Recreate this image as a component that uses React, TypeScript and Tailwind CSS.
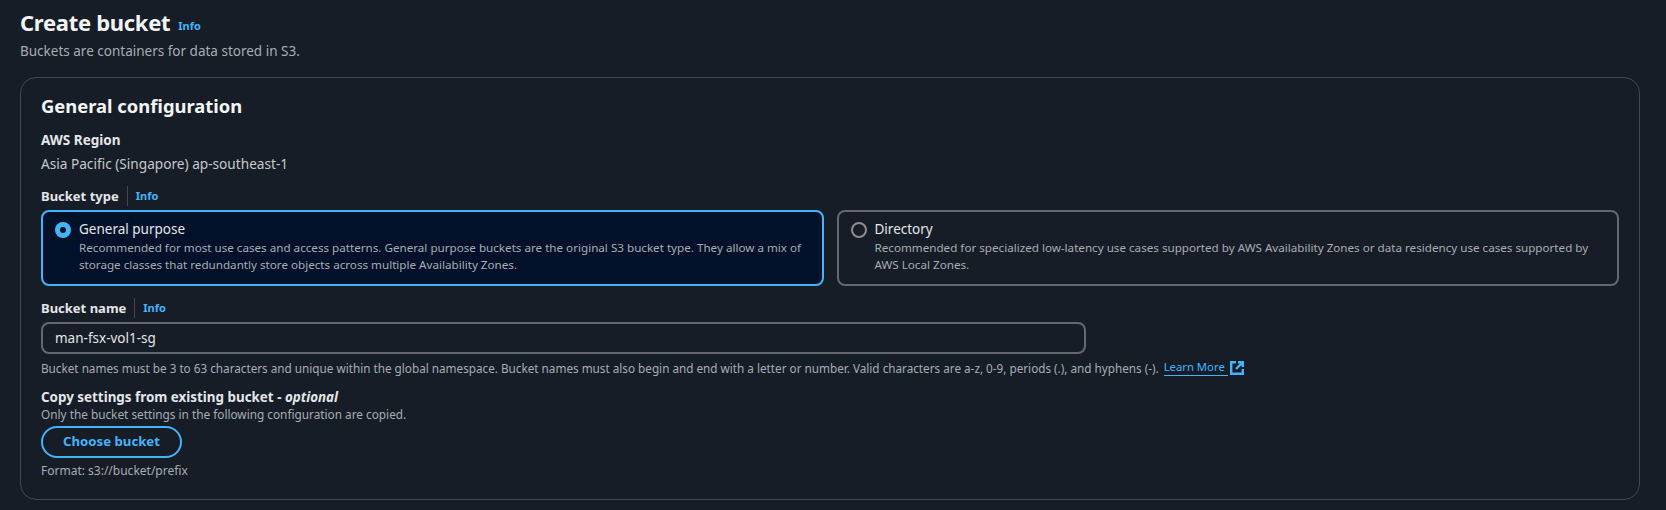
const font = "font-['Noto_Sans',sans-serif]";

function InfoLink() {
  return <span className="text-[11px] font-bold leading-[20px] text-[#42b4ff]">Info</span>;
}

function FieldLabel({ label }: { label: string }) {
  return (
    <div className="flex h-[20px] items-center">
      <span className="text-[13px] font-bold leading-[20px] text-[#e4e6ea]">{label}</span>
      <span className="mx-[8px] h-[20px] w-px bg-[#424650]" />
      <InfoLink />
    </div>
  );
}

function Tile({ title, lines, selected }: { title: string; lines: string[]; selected?: boolean }) {
  return (
    <div
      className={
        selected
          ? 'flex h-[76px] flex-1 rounded-[8px] border-2 border-[#42b4ff] bg-[#001129] pl-[12px] pt-[3px]'
          : 'flex h-[76px] flex-1 rounded-[8px] border-2 border-[#656871] pl-[12px] pt-[3px]'
      }
    >
      <div className="pt-[7px]">
        {selected ? (
          <div className="flex size-[16px] items-center justify-center rounded-full bg-[#42b4ff]">
            <div className="size-[6px] rounded-full bg-[#0f141a]" />
          </div>
        ) : (
          <div className="size-[16px] rounded-full border-2 border-[#8c8c94]" />
        )}
      </div>
      <div className="ml-[8px] pt-[4px]">
        <div className="text-[13.5px] leading-[20px] text-[#e4e6ea]">{title}</div>
        {lines.map((line) => (
          <div key={line} className="whitespace-nowrap text-[11.65px] leading-[17px] text-[#a8acb4]">
            {line}
          </div>
        ))}
      </div>
    </div>
  );
}

export default function App() {
  return (
    <div className={`h-[510px] w-[1666px] overflow-hidden bg-[#161d26] pl-[20px] pr-[26px] ${font}`}>
      <div className="flex h-[44px] items-center">
        <h1 className="text-[22px] font-bold tracking-[-0.3px] text-[#f3f4f6]">Create bucket</h1>
        <span className="ml-[8px] mt-[4px]">
          <InfoLink />
        </span>
      </div>
      <p className="mt-[-3px] text-[13.5px] leading-[20px] text-[#a8acb4]">Buckets are containers for data stored in S3.</p>

      <div className="mt-[16px] h-[423px] rounded-[16px] border border-[#424650] px-[20px]">
        <h2 className="mt-[14px] text-[18.4px] font-bold leading-[28px] text-[#f3f4f6]">General configuration</h2>

        <div className="mt-[10px] text-[13.5px] font-bold leading-[20px] text-[#e4e6ea]">AWS Region</div>
        <div className="mt-[4px] text-[13.65px] leading-[20px] text-[#c6c8ce]">Asia Pacific (Singapore) ap-southeast-1</div>

        <div className="mt-[12px]">
          <FieldLabel label="Bucket type" />
        </div>
        <div className="mt-[4px] flex gap-[13px]">
          <Tile
            selected
            title="General purpose"
            lines={[
              'Recommended for most use cases and access patterns. General purpose buckets are the original S3 bucket type. They allow a mix of',
              'storage classes that redundantly store objects across multiple Availability Zones.',
            ]}
          />
          <Tile
            title="Directory"
            lines={[
              'Recommended for specialized low-latency use cases supported by AWS Availability Zones or data residency use cases supported by',
              'AWS Local Zones.',
            ]}
          />
        </div>

        <div className="mt-[12px]">
          <FieldLabel label="Bucket name" />
        </div>
        <div className="mt-[4px] flex h-[32px] w-[1045px] items-center rounded-[8px] border-2 border-[#656871] pl-[12px] text-[13.5px] text-[#e4e6ea]">
          man-fsx-vol1-sg
        </div>
        <div className="mt-[5px] flex items-center text-[11.73px] leading-[16px] text-[#a8acb4]">
          <span>
            Bucket names must be 3 to 63 characters and unique within the global namespace. Bucket names must also begin and end with a letter or number. Valid characters are a-z, 0-9, periods (.), and hyphens (-).
          </span>
          <span className="ml-[5px] border-b border-[#42b4ff] pr-[3px] text-[11.3px] text-[#42b4ff]">Learn More</span>
          <svg className="ml-[2px]" width="14" height="14" viewBox="0 0 14 14" fill="none" stroke="#42b4ff" strokeWidth="2.4">
            <path d="M6 1.2H1.2v11.6h11.6V8" />
            <path d="M8 1.2h4.8V6M12.8 1.2 6 8" />
          </svg>
        </div>

        <div className="mt-[12px] text-[13.4px] font-bold leading-[18px] text-[#e4e6ea]">
          Copy settings from existing bucket - <em>optional</em>
        </div>
        <div className="text-[11.8px] leading-[17px] text-[#a8acb4]">Only the bucket settings in the following configuration are copied.</div>
        <button className="mt-[3px] block h-[32px] w-[141px] rounded-full border-2 border-[#42b4ff] text-[13.2px] font-bold text-[#42b4ff]">
          Choose bucket
        </button>
        <div className="mt-[5px] text-[12px] leading-[16px] text-[#a8acb4]">Format: s3://bucket/prefix</div>
      </div>
    </div>
  );
}
